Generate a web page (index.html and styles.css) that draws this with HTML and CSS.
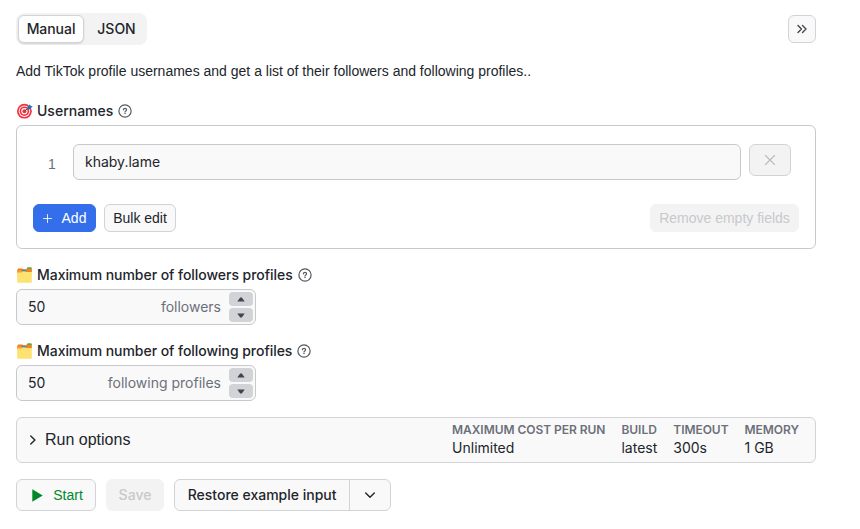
FILE: index.html
```html
<!DOCTYPE html>
<html lang="en">
<head>
<meta charset="utf-8">
<title>Actor input</title>
<link rel="stylesheet" href="styles.css">
</head>
<body>
<svg width="0" height="0" class="defs" aria-hidden="true">
  <symbol id="help" viewBox="0 0 14 14"><g fill="none" stroke="currentColor" stroke-width="1.2" stroke-linecap="round"><circle cx="7" cy="7" r="6.1"/><path d="M5.4 5.8C5.4 4 8.6 4 8.6 5.8C8.6 6.9 7 6.9 7 8"/></g><circle cx="7" cy="9.6" r=".75" fill="currentColor"/></symbol>
  <symbol id="folder" viewBox="0 0 16 16"><path fill="#f47b20" d="M.7 3l1-1.5h4.2l1 .7h8v4H.7z"/><path fill="#ff9d35" d="M.7 3.4h6v3h-6z"/><path fill="#3e8fb5" d="M5 2.8h5v1.4H5z"/><path fill="#62a744" d="M10.4 1.3L11 .3h3.6l.7.8v1.3h-4.9z"/><path fill="#f58220" d="M10 2.2h5.3v3H10z"/><path fill="#fde272" d="M.7 5.4h4.4l1-1h3.5l-.5.6h6.2v10.2a.6.6 0 0 1-.6.6H1.3a.6.6 0 0 1-.6-.6z"/></symbol>
</svg>
<main class="form">
  <header class="top">
    <div class="tabs"><button class="tab active">Manual</button><button class="tab">JSON</button></div>
    <button class="btn collapse" aria-label="Collapse"><svg width="12" height="12" viewBox="0 0 12 12"><path class="line" d="M2 2.5L5.5 6L2 9.5M6.5 2.5L10 6L6.5 9.5"/></svg></button>
  </header>
  <p class="intro">Add TikTok profile usernames and get a list of their followers and following profiles..</p>

  <div class="label"><svg class="emoji" viewBox="0 0 16 16"><circle cx="7.9" cy="8.2" r="7.4" fill="#f4303c"/><circle cx="7.9" cy="8.2" r="5.7" fill="#fff"/><circle cx="7.9" cy="8.2" r="4.8" fill="#f4303c"/><circle cx="7.9" cy="8.2" r="3.1" fill="#fff"/><circle cx="7.9" cy="8.2" r="2" fill="#f4303c"/><path d="M7.8 8.3L12.4 4.6" stroke="#4b5965" stroke-width="1"/><path d="M11.2 4.4l2-2.7.8 1.4 1.7.5-2.4 2.4-2 .2z" fill="#1874bd" stroke="#1874bd" stroke-width=".5"/></svg><span>Usernames</span><svg class="help"><use href="#help"/></svg></div>
  <section class="panel">
    <div class="row">
      <span class="index">1</span>
      <div class="field">khaby.lame</div>
      <button class="remove" aria-label="Remove"><svg width="12" height="12" viewBox="0 0 12 12"><path class="line thin" d="M1.5 1.5l9 9M10.5 1.5l-9 9"/></svg></button>
    </div>
    <div class="actions">
      <button class="btn primary"><svg width="9" height="9" viewBox="0 0 9 9"><path class="line plus" d="M4.5.5v8M.5 4.5h8"/></svg><span>Add</span></button>
      <button class="btn bulk">Bulk edit</button>
      <button class="btn disabled clear">Remove empty fields</button>
    </div>
  </section>

  <div class="label second"><svg class="emoji"><use href="#folder"/></svg><span>Maximum number of followers profiles</span><svg class="help"><use href="#help"/></svg></div>
  <div class="number"><span class="value">50</span><span class="unit">followers</span><span class="spin"><button aria-label="Increase"><svg width="8" height="5" viewBox="0 0 8 5"><path d="M.3 4.6L3.2.6h1.6l2.9 4z"/></svg></button><button aria-label="Decrease"><svg width="8" height="5" viewBox="0 0 8 5"><path d="M.3.4L3.2 4.4h1.6l2.9-4z"/></svg></button></span></div>

  <div class="label third"><svg class="emoji"><use href="#folder"/></svg><span>Maximum number of following profiles</span><svg class="help"><use href="#help"/></svg></div>
  <div class="number"><span class="value">50</span><span class="unit">following profiles</span><span class="spin"><button aria-label="Increase"><svg width="8" height="5" viewBox="0 0 8 5"><path d="M.3 4.6L3.2.6h1.6l2.9 4z"/></svg></button><button aria-label="Decrease"><svg width="8" height="5" viewBox="0 0 8 5"><path d="M.3.4L3.2 4.4h1.6l2.9-4z"/></svg></button></span></div>

  <section class="options">
    <svg width="8" height="12" viewBox="0 0 8 12"><path class="line" d="M1.8 1.9L5.9 6L1.8 10.1"/></svg>
    <h2>Run options</h2>
    <dl>
      <div><dt>MAXIMUM COST PER RUN</dt><dd>Unlimited</dd></div>
      <div><dt>BUILD</dt><dd>latest</dd></div>
      <div><dt>TIMEOUT</dt><dd>300s</dd></div>
      <div><dt>MEMORY</dt><dd>1 GB</dd></div>
    </dl>
  </section>

  <footer class="bottom">
    <button class="btn start"><svg width="11" height="13" viewBox="0 0 11 13"><path d="M.3.3L10.7 6.5L.3 12.7z"/></svg><span>Start</span></button>
    <button class="btn disabled save">Save</button>
    <div class="split"><button class="restore">Restore example input</button><button class="more" aria-label="More"><svg width="12" height="8" viewBox="0 0 12 8"><path class="line" d="M1.7 1.9L6 6.2l4.3-4.3"/></svg></button></div>
  </footer>
</main>
</body>
</html>
```

FILE: styles.css
```css
* { box-sizing: border-box; }
body {
  margin: 0;
  background: #fff;
  color: #22252b;
  font: 14px/20px Inter, "Liberation Sans", sans-serif;
}
.defs { position: absolute; }
svg { display: block; flex: none; }
button {
  margin: 0;
  padding: 0;
  border: 0;
  background: none;
  color: inherit;
  font: inherit;
  display: flex;
  align-items: center;
  justify-content: center;
}
.line { fill: none; stroke: currentColor; stroke-width: 1.4; stroke-linecap: round; stroke-linejoin: round; }
.thin { stroke-width: 1.1; }
.plus { stroke-width: 1; opacity: .85; }
.form { width: 800px; margin: 13px 0 0 16px; }
.top { display: flex; justify-content: space-between; align-items: center; height: 32px; }
.tabs { display: flex; width: 131px; height: 32px; padding: 2px; border-radius: 8px; background: #f3f3f3; }
.tab { height: 28px; width: 65px; flex: none; font-weight: 500; }
.tab.active { width: 66px; background: #fff; border: 1px solid #d2d3d6; border-radius: 6px; box-shadow: 0 1px 2px #0002; letter-spacing: -.05px; }
.btn {
  height: 28px;
  border: 1px solid #d2d3d6;
  border-radius: 6px;
  background: #f9f9f9;
  font-family: "Liberation Sans", Arial, sans-serif;
  white-space: nowrap;
}
.collapse { width: 28px; color: #41444b; }
.intro { margin: 16px 0 0; font: 14px/20px "Liberation Sans", Arial, sans-serif; white-space: nowrap; }
.label { display: flex; align-items: center; height: 20px; margin-top: 20px; font-weight: 500; white-space: nowrap; }
.emoji { width: 17px; height: 16px; margin-right: 4px; }
.help { width: 14px; height: 14px; margin-left: 5px; color: #555961; }
.panel { height: 124px; margin-top: 4px; padding: 18px 16px 0; border: 1px solid #c8c9cc; border-radius: 6px; }
.row { display: flex; height: 36px; }
.index { width: 40px; padding: 10px 0 0 15px; color: #6c707a; font-family: "Liberation Sans", Arial, sans-serif; }
.field { width: 668px; height: 36px; padding: 7px 11px; border: 1px solid #c8c9cc; border-radius: 6px; background: #f9f9f9; }
.remove { width: 42px; height: 32px; margin-left: 8px; border: 1px solid #d2d3d6; border-radius: 6px; background: #f3f3f3; color: #b9bbbf; }
.actions { display: flex; gap: 8px; margin-top: 24px; }
.primary { width: 63px; gap: 10px; border-color: #356eeb; background: #356eeb; color: #fff; }
.bulk { width: 72px; }
.disabled { border-color: #f3f3f3; background: #f3f3f3; color: #c7c9cd; }
.clear { width: 149px; margin-left: auto; }
.label.second, .label.third { margin-top: 16px; letter-spacing: -.045px; }
.number { display: flex; align-items: center; width: 240px; height: 36px; margin-top: 4px; padding: 0 2px 0 11px; border: 1px solid #c8c9cc; border-radius: 6px; background: #f9f9f9; }
.unit { margin-left: auto; color: #6c707a; }
.spin { display: grid; gap: 2px; margin-left: 8px; }
.spin button { width: 24px; height: 14px; border-radius: 4px; background: #d2d3d6; color: #41444b; }
.spin path, .start path { fill: currentColor; }
.options { display: flex; align-items: center; height: 46px; margin-top: 16px; padding: 0 16px 0 12px; border: 1px solid #d2d3d6; border-radius: 6px; background: #f9f9f9; }
h2 { margin: 0 0 0 8px; font: 16px/24px "Liberation Sans", Arial, sans-serif; }
dl { display: flex; gap: 16px; margin: 0 0 0 auto; white-space: nowrap; }
dt { color: #6c707a; font-size: 12px; line-height: 16px; font-weight: 600; letter-spacing: -.04px; }
dd { margin: 0; line-height: 20px; }
.bottom { display: flex; margin-top: 16px; }
.bottom .btn { height: 32px; }
.bottom .start { width: 80px; gap: 10px; padding-left: 3px; color: #00882b; }
.bottom .save { width: 58px; margin: 0 10px; font: 500 14px/20px Inter, sans-serif; }
.split { display: flex; width: 217px; height: 32px; border: 1px solid #d2d3d6; border-radius: 6px; background: #f9f9f9; font-weight: 500; }
.restore { width: 175px; white-space: nowrap; }
.more { width: 41px; border-left: 1px solid #d2d3d6; }
```
